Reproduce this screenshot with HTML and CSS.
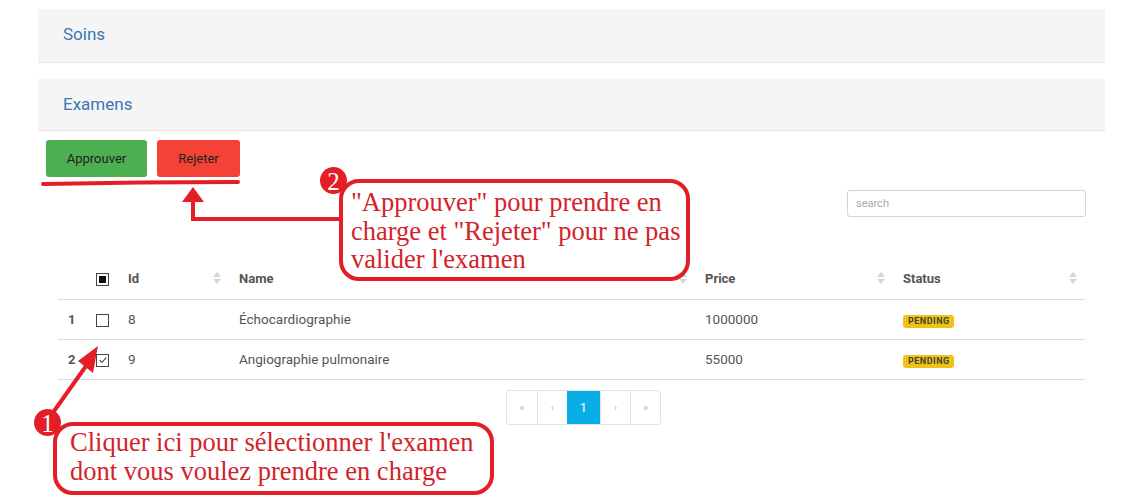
FILE: index.html
```html
<!DOCTYPE html>
<html lang="fr">
<head>
<meta charset="utf-8">
<title>Examens</title>
<link rel="stylesheet" href="styles.css">
</head>
<body>
<div class="page">
  <div class="panel"><span class="panel-title">Soins</span></div>
  <div class="panel panel-second"><span class="panel-title">Examens</span></div>
  <div class="toolbar">
    <button class="btn btn-approve">Approuver</button>
    <button class="btn btn-reject">Rejeter</button>
  </div>
  <div class="search-row">
    <input class="search" type="text" placeholder="search">
  </div>
  <table class="grid">
    <colgroup>
      <col class="c-num"><col class="c-chk"><col class="c-id"><col class="c-name"><col class="c-price"><col class="c-status">
    </colgroup>
    <thead>
      <tr>
        <th></th>
        <th><span class="chk chk-ind"></span></th>
        <th class="sortable">Id<span class="sort"></span></th>
        <th class="sortable">Name<span class="sort"></span></th>
        <th class="sortable">Price<span class="sort"></span></th>
        <th class="sortable">Status<span class="sort"></span></th>
      </tr>
    </thead>
    <tbody>
      <tr>
        <td class="num">1</td>
        <td><span class="chk"></span></td>
        <td>8</td>
        <td>Échocardiographie</td>
        <td>1000000</td>
        <td><span class="badge">PENDING</span></td>
      </tr>
      <tr>
        <td class="num">2</td>
        <td><span class="chk chk-on"><svg viewBox="0 0 12 12" width="10" height="10"><path d="M2 6.2 L4.8 8.8 L10 3" fill="none" stroke="#333" stroke-width="1.3"/></svg></span></td>
        <td>9</td>
        <td>Angiographie pulmonaire</td>
        <td>55000</td>
        <td><span class="badge">PENDING</span></td>
      </tr>
    </tbody>
  </table>
  <div class="pager-row">
    <ul class="pager">
      <li>«</li><li>‹</li><li class="active">1</li><li>›</li><li>»</li>
    </ul>
  </div>
</div>

<svg class="annot" width="1144" height="499" viewBox="0 0 1144 499">
  <path d="M43 184 Q140 182 238 182" fill="none" stroke="#e31e27" stroke-width="4" stroke-linecap="round"/>
  <path d="M193 199 V219 H342" fill="none" stroke="#e31e27" stroke-width="4"/>
  <polygon points="193,187 182,202 204,202" fill="#e31e27"/>
  <line x1="52" y1="414" x2="86" y2="366" stroke="#e31e27" stroke-width="4"/>
  <polygon points="98,346 78,361 93,373" fill="#e31e27"/>
</svg>

<div class="callout callout-2">"Approuver" pour prendre en<br>charge et "Rejeter" pour ne pas<br>valider l'examen</div>
<div class="marker marker-2">2</div>
<div class="callout callout-1">Cliquer ici pour sélectionner l'examen<br>dont vous voulez prendre en charge</div>
<div class="marker marker-1">1</div>
</body>
</html>
```
FILE: styles.css
```css
* { box-sizing: border-box; }
html, body { margin: 0; padding: 0; }
body {
  background: #fff;
  font-family: Roboto, "Liberation Sans", sans-serif;
  color: #555;
  width: 1144px;
  height: 499px;
  overflow: hidden;
  position: relative;
}
.page {
  padding: 9px 39px 0 38px;
}
.panel {
  height: 54px;
  background: #f5f5f5;
  border-bottom: 1px solid #e6e6e6;
  display: flex;
  align-items: center;
  padding-left: 25px;
  padding-bottom: 3px;
}
.panel-second { margin-top: 16px; height: 52px; padding-bottom: 2px; }
.panel-title {
  font-size: 17px;
  color: #3a75b3;
}
.toolbar {
  display: flex;
  gap: 10px;
  margin-top: 9px;
  padding-left: 8px;
}
.btn {
  height: 37px;
  border: none;
  border-radius: 3px;
  font-family: Roboto, "Liberation Sans", sans-serif;
  font-size: 13px;
  color: #222;
  padding: 0;
}
.btn-approve { width: 101px; background: #4caf50; }
.btn-reject { width: 83px; background: #f44336; }
.search-row {
  display: flex;
  justify-content: flex-end;
  margin-top: 13px;
  padding-right: 19px;
}
.search {
  width: 239px;
  height: 27px;
  border: 1px solid #d4d4d4;
  border-radius: 3px;
  background: #fff;
  font-family: Roboto, "Liberation Sans", sans-serif;
  font-size: 11px;
  padding: 0 8px;
  color: #555;
}
.search::placeholder { color: #aaa; }
.grid {
  margin: 45px 0 0 20px;
  width: 1027px;
  border-collapse: collapse;
  table-layout: fixed;
  font-size: 13.5px;
}
.c-num { width: 32px; }
.c-chk { width: 28px; }
.c-id { width: 111px; }
.c-name { width: 466px; }
.c-price { width: 198px; }
.c-status { width: 192px; }
.grid th {
  height: 37px;
  text-align: left;
  font-weight: 700;
  font-size: 13px;
  color: #555;
  padding: 0 0 3px 10px;
  border-bottom: 1px solid #ddd;
  position: relative;
}
.grid th:nth-child(2), .grid td:nth-child(2) { padding-left: 6px; }
.grid td {
  height: 40px;
  padding: 0 0 0 10px;
  border-bottom: 1px solid #ddd;
  color: #555;
}
.grid td.num { font-weight: 700; font-size: 13px; }
.sort {
  position: absolute;
  right: 7px;
  top: 50%;
  margin-top: -8px;
  width: 9px;
  height: 12px;
}
.sort::before, .sort::after {
  content: "";
  position: absolute;
  left: 0;
  border-left: 4.5px solid transparent;
  border-right: 4.5px solid transparent;
}
.sort::before { top: 0; border-bottom: 5px solid #d3d6da; }
.sort::after { bottom: 0; border-top: 5px solid #d3d6da; }
.chk {
  display: inline-flex;
  align-items: center;
  justify-content: center;
  width: 13px;
  height: 13px;
  border: 1px solid #444;
  background: #fff;
  vertical-align: middle;
}
.chk-ind::after {
  content: "";
  width: 7px;
  height: 7px;
  background: #111;
}
.badge {
  display: inline-block;
  background: #f2c118;
  color: #3a4a2a;
  font-size: 9px;
  font-weight: 700;
  letter-spacing: 0.5px;
  padding: 1px 4px 1px 5px;
  border-radius: 3px;
  line-height: 11px;
}
.pager-row {
  display: flex;
  justify-content: center;
  margin-top: 10px;
  padding-left: 24px;
}
.pager {
  display: flex;
  list-style: none;
  margin: 0;
  padding: 0;
  border: 1px solid #e2e2e2;
  border-radius: 3px;
  overflow: hidden;
}
.pager li {
  width: 30px;
  height: 33px;
  display: flex;
  align-items: center;
  justify-content: center;
  font-size: 11px;
  color: #bbb;
  border-left: 1px solid #e2e2e2;
}
.pager li:first-child { border-left: none; }
.pager li.active {
  width: 33px;
  background: #0aaee6;
  color: #fff;
  font-size: 13px;
  border-left: none;
}
.annot {
  position: absolute;
  left: 0;
  top: 0;
  pointer-events: none;
}
.callout {
  position: absolute;
  border: 4px solid #e31e27;
  border-radius: 20px;
  background: #fff;
  color: #d2232a;
  font-family: "Liberation Serif", "Times New Roman", serif;
  font-size: 26.5px;
  line-height: 28.5px;
  white-space: nowrap;
}
.callout-2 {
  left: 339px;
  top: 179px;
  width: 351px;
  height: 102px;
  padding: 5px 0 0 8px;
}
.callout-1 {
  left: 53px;
  top: 422px;
  width: 441px;
  height: 73px;
  padding: 2px 0 0 13px;
}
.marker {
  position: absolute;
  width: 27px;
  height: 27px;
  border-radius: 50%;
  background: #e31e27;
  color: #fff;
  font-family: "Liberation Serif", "Times New Roman", serif;
  font-size: 25px;
  line-height: 29px;
  text-align: center;
}
.marker-2 { left: 320px; top: 167px; }
.marker-1 { left: 34px; top: 409px; }
```
